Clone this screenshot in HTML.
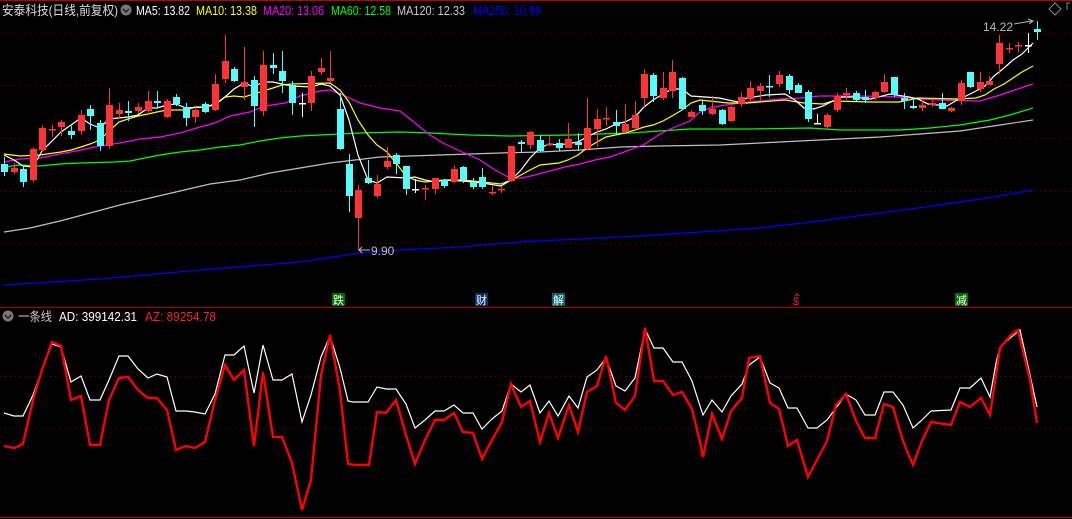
<!DOCTYPE html>
<html><head><meta charset="utf-8"><style>
html,body{margin:0;padding:0;background:#000;width:1072px;height:519px;overflow:hidden}
svg{display:block}
text{font-family:"Liberation Sans","Noto Sans CJK SC",sans-serif}
</style></head><body>
<svg id="s" width="1072" height="519" viewBox="0 0 1072 519" xmlns="http://www.w3.org/2000/svg">
<rect width="1072" height="519" fill="#000"/>
<line x1="0" y1="0.5" x2="1072" y2="0.5" stroke="#b00" stroke-width="1"/>
<g stroke="#8a0000" stroke-dasharray="1 4" stroke-width="1">
<line x1="0" y1="33.5" x2="1072" y2="33.5"/><line x1="0" y1="85.5" x2="1072" y2="85.5"/>
<line x1="0" y1="138.5" x2="1072" y2="138.5"/><line x1="0" y1="191.5" x2="1072" y2="191.5"/>
<line x1="0" y1="243.5" x2="1072" y2="243.5"/>
<line x1="0" y1="376.5" x2="1072" y2="376.5"/><line x1="0" y1="428.5" x2="1072" y2="428.5"/>
</g>
<line x1="0" y1="307.5" x2="1072" y2="307.5" stroke="#a00" />
<line x1="0" y1="517.5" x2="1072" y2="517.5" stroke="#a00" />
<g id="ma" fill="none" stroke-width="1.2">
<polyline stroke="#0000ff" points="4,285 100,279 200,270 300,262 360,253 400,250 460,247 520,242 580,239 640,236 700,232 760,228 820,221 880,213 940,205 1000,196 1033,190"/>
<polyline stroke="#c0c0c0" points="4,232 30,228 60,221 90,213 120,205 150,198 180,191 210,184 240,180 270,173 300,168 330,163 355,160 380,157 410,156 440,155 470,154 500,153 540,152 580,150 620,147 660,146 720,145 760,143 800,141 840,139 880,137 920,134 960,131 1000,125 1033,120"/>
<polyline stroke="#00ff00" points="4,167 20,165 40,166 60,164 80,163 115,162 130,161 145,158 160,155 180,152 200,150 220,147 240,145 260,141 280,138 300,136 320,135 340,134 360,133 400,132 430,133 470,135 510,136 570,135 600,134 630,133 660,131 690,129 750,129 810,128 840,130 900,130 930,128 960,125 990,120 1010,115 1033,108"/>
<polyline stroke="#ff00ff" points="4,162 20,159 40,158 60,154 81,150 100,146 120,143 140,139 160,137 180,133 200,127 215,123 230,116 250,112 265,106 285,103 300,96 320,91 330,90 345,96 360,103 380,108 400,111 415,123 430,135 445,144 460,151 480,160 495,170 510,178 522,178 535,175 550,171 565,167 580,164 595,160 610,157 630,150 645,144 660,134 675,127 690,121 700,112 710,108 720,106 740,103 760,101 780,99 800,98 820,96 860,96 900,97 920,99 940,100 980,101 1000,95 1015,90 1033,84"/>
<polyline stroke="#ffff00" points="4,154 20,156 40,155 61,152 71,150 81,147 90,144 100,140 109,131 119,122 128,119 138,116 148,114 157,112 167,110 186,110 195,107 205,107 215,104 225,97 234,96 244,97 254,94 263,91 273,88 282,85 292,84 330,83 340,90 349,102 358,120 368,135 377,145 387,152 396,163 406,176 415,180 425,182 444,180 463,180 482,182 501,184 511,180 521,175 530,170 540,165 559,163 568,160 578,155 587,148 597,142 606,137 625,133 635,130 644,127 653,125 663,121 672,116 682,110 691,103 700,100 728,103 747,103 785,100 804,103 823,104 833,101 871,102 899,102 909,100 918,98 957,99 976,98 985,95 994,89 1004,84 1013,78 1022,72 1033,66"/>
<polyline stroke="#ffffff" points="4,155 14,160 23,166 33,167 42,151 52,141 61,132 71,125 81,118 90,124 100,128 109,119 128,117 138,115 148,108 157,108 167,105 176,104 186,108 205,107 215,105 225,97 234,89 244,83 254,87 263,82 273,82 282,84 292,86 311,87 321,84 330,86 340,95 349,120 358,155 368,180 377,183 387,177 406,178 415,177 425,180 435,182 444,180 463,181 482,183 501,186 511,180 521,170 530,158 540,148 549,144 559,145 578,142 587,137 597,132 606,129 616,124 625,122 635,117 644,107 653,100 663,94 672,89 682,89 691,96 719,98 738,102 747,98 766,95 785,94 795,100 804,108 814,109 823,106 833,101 842,97 852,97 871,99 890,94 909,97 918,99 928,104 947,106 957,100 966,96 976,91 985,86 994,76 1004,68 1013,60 1022,54 1033,43"/>
</g>
<g id="c"></g>
<polyline fill="none" stroke="#fff" stroke-width="1.2" points="4,413 14,416 23,416 33,395 42,370 52,344 61,347 71,382 81,376 90,400 100,400 109,380 119,356 128,356 138,369 148,378 157,374 167,377 176,411 186,411 195,412 205,414 215,394 225,355 234,355 244,346 254,393 263,345 273,380 282,380 292,374 302,422 311,395 321,357 330,336 340,368 348,401 353,402 368,402 377,387 386,389 396,389 406,404 415,428 425,420 435,411 444,411 454,405 463,413 473,413 482,429 492,419 502,411 511,384 521,392 530,385 540,413 549,401 558,416 569,396 578,408 587,377 597,370 606,358 616,386 625,391 635,378 645,329 654,348 663,348 673,362 682,362 692,381 700,406 703,415 712,400 722,412 731,396 742,384 749,365 760,357 770,383 779,388 788,408 797,408 808,428 817,428 827,420 836,408 846,394 856,400 865,415 875,415 884,392 893,392 903,405 913,428 922,420 931,411 951,410 960,388 970,388 981,378 990,397 996,363 1000,347 1010,338 1020,330 1030,375 1037,407"/>
<polyline fill="none" stroke="#ff0000" stroke-width="2.4" points="4,446 14,448 23,444 33,400 42,370 52,342 61,346 71,400 81,396 90,445 100,445 109,400 119,378 128,377 138,390 148,398 157,398 167,410 176,450 186,446 195,448 205,442 215,400 225,365 234,380 244,370 254,446 263,372 273,437 282,437 292,463 302,510 311,480 321,375 330,335 340,391 348,464 355,465 369,465 377,412 386,413 396,400 406,435 415,464 425,440 435,420 444,420 454,413 463,432 473,433 482,459 492,440 502,422 511,384 521,407 530,401 540,442 549,413 558,438 569,405 578,432 587,392 597,386 606,356 616,403 625,410 635,396 645,328 654,381 663,381 673,395 682,392 692,409 700,442 703,457 712,414 722,439 731,411 742,398 749,358 760,356 770,403 779,409 788,446 797,440 808,477 817,460 827,441 836,405 846,394 856,421 865,438 875,438 884,404 893,407 903,441 913,465 922,441 931,422 951,425 960,402 970,407 981,398 990,415 1000,348 1010,336 1018,330 1030,380 1037,423"/>
<text x="2" y="15" font-size="13" fill="#ddd" textLength="116" lengthAdjust="spacingAndGlyphs">安泰科技(日线,前复权)</text>
<circle cx="126" cy="10" r="5.5" fill="#777"/><path d="M123 9 L126 12 L129 9" stroke="#222" stroke-width="1.5" fill="none"/>
<text x="136" y="15" font-size="12.5" fill="#fff" textLength="54" lengthAdjust="spacingAndGlyphs">MA5: 13.82</text>
<text x="196" y="15" font-size="12.5" fill="#ffff00" textLength="61" lengthAdjust="spacingAndGlyphs">MA10: 13.38</text>
<text x="263" y="15" font-size="12.5" fill="#ff00ff" textLength="61" lengthAdjust="spacingAndGlyphs">MA20: 13.06</text>
<text x="331" y="15" font-size="12.5" fill="#00ff00" textLength="60" lengthAdjust="spacingAndGlyphs">MA60: 12.58</text>
<text x="397" y="15" font-size="12.5" fill="#c8c8c8" textLength="68" lengthAdjust="spacingAndGlyphs">MA120: 12.33</text>
<text x="473" y="15" font-size="12.5" fill="#0000ff" textLength="68" lengthAdjust="spacingAndGlyphs">MA250: 10.99</text>
<path d="M1049 9 L1055 3 L1061 9 L1055 15 Z" fill="none" stroke="#888" />
<path d="M1070 3 L1067 3 L1067 10" fill="none" stroke="#888"/>
<text x="983" y="31" font-size="12" fill="#bbb">14.22</text>
<path d="M1014 24 L1032 21 M1028 19 L1033 21 L1029 24" stroke="#bbb" fill="none"/>
<path d="M359 250 L370 250 M362 247 L359 250 L362 253" stroke="#bbb" fill="none"/>
<text x="371" y="255" font-size="12" fill="#bbb">9.90</text>
<rect x="332" y="293" width="13" height="13" fill="#007000"/><text x="333" y="304" font-size="11" fill="#fff">跌</text>
<rect x="475" y="293" width="13" height="13" fill="#0a3070"/><text x="476" y="304" font-size="11" fill="#fff">财</text>
<rect x="552" y="293" width="13" height="13" fill="#006868"/><text x="553" y="304" font-size="11" fill="#fff">解</text>
<text x="793" y="305" font-size="11" fill="#ff2020">$</text><path d="M795 296 L797 294 L799 296" stroke="#f22" fill="none"/>
<rect x="955" y="293" width="13" height="13" fill="#007000"/><text x="956" y="304" font-size="11" fill="#fff">减</text>
<circle cx="8" cy="316" r="5.5" fill="#777"/><path d="M5 315 L8 318 L11 315" stroke="#222" stroke-width="1.5" fill="none"/>
<text x="18" y="321" font-size="12.5" fill="#ccc" textLength="34" lengthAdjust="spacingAndGlyphs">一条线</text>
<text x="59" y="321" font-size="12.5" fill="#fff" textLength="78" lengthAdjust="spacingAndGlyphs">AD: 399142.31</text>
<text x="145" y="321" font-size="12.5" fill="#ff2020" textLength="71" lengthAdjust="spacingAndGlyphs">AZ: 89254.78</text>
</svg>
<script>
var d=[[4,164,172,157,176,'c'],[14,168,172,163,174,'r'],[23,169,182,166,187,'c'],[33,149,180,147,182,'r'],[42,128,150,125,152,'r'],[52,129,130,125,137,'r'],[61,122,127,120,136,'r'],[71,131,135,126,139,'c'],[81,115,131,110,135,'r'],[90,109,116,105,130,'c'],[100,123,146,120,151,'c'],[109,105,146,88,149,'r'],[119,110,114,103,119,'r'],[128,111,113,101,121,'c'],[138,107,111,103,114,'r'],[148,101,111,91,114,'r'],[157,101,103,91,108,'c'],[167,101,117,99,118,'r'],[176,97,104,94,106,'c'],[186,107,118,103,126,'c'],[195,110,117,107,123,'r'],[205,104,112,102,113,'c'],[215,84,110,74,111,'r'],[225,61,79,35,83,'r'],[234,69,81,67,82,'c'],[244,82,87,47,100,'r'],[254,80,106,76,127,'c'],[263,65,111,51,116,'r'],[273,65,68,53,74,'c'],[282,71,81,51,93,'c'],[292,85,103,81,115,'c'],[302,103,104,93,117,'w'],[311,76,103,71,111,'r'],[321,68,72,58,75,'r'],[330,78,81,51,83,'r'],[340,109,149,93,150,'c'],[349,164,196,154,212,'c'],[358,190,218,185,250,'r'],[368,178,183,160,184,'c'],[377,184,196,175,198,'r'],[387,161,167,147,169,'r'],[396,155,164,153,174,'c'],[406,166,189,166,195,'c'],[415,189,190,179,193,'w'],[425,188,189,185,200,'r'],[435,178,189,178,194,'r'],[444,180,186,179,188,'c'],[454,169,182,165,183,'r'],[463,167,180,166,183,'c'],[473,182,187,178,189,'c'],[482,177,187,168,189,'c'],[492,192,193,186,195,'r'],[501,189,190,186,193,'r'],[511,146,181,146,182,'r'],[521,142,144,140,152,'c'],[530,132,145,131,149,'r'],[540,140,151,136,152,'c'],[549,144,145,136,146,'r'],[559,143,148,139,151,'c'],[568,139,148,123,148,'r'],[578,142,145,133,151,'c'],[587,128,149,98,150,'r'],[597,119,129,109,147,'r'],[606,118,119,107,126,'r'],[616,122,126,110,135,'c'],[625,124,132,104,133,'r'],[635,115,128,101,131,'r'],[644,74,98,69,107,'r'],[653,75,96,73,102,'c'],[663,88,98,72,100,'r'],[672,72,91,60,98,'r'],[682,78,109,77,110,'c'],[691,112,117,110,117,'r'],[702,105,111,100,115,'c'],[712,109,114,96,115,'r'],[722,110,124,109,125,'c'],[731,107,121,106,122,'r'],[741,97,104,92,107,'r'],[750,88,99,81,102,'r'],[760,86,91,83,100,'r'],[769,86,87,75,97,'c'],[779,75,84,71,87,'r'],[789,76,90,74,94,'c'],[798,85,93,83,93,'c'],[808,92,119,90,122,'c'],[817,123,124,114,124,'w'],[827,115,127,113,129,'r'],[837,96,110,93,112,'r'],[846,93,95,88,100,'r'],[856,93,100,91,102,'c'],[865,97,100,90,103,'c'],[875,92,98,91,100,'r'],[884,82,92,74,93,'r'],[894,77,95,77,97,'c'],[904,98,101,93,109,'c'],[913,106,108,98,109,'c'],[922,105,108,100,111,'r'],[932,103,105,100,107,'r'],[942,103,109,93,109,'c'],[951,108,111,107,112,'r'],[961,83,101,80,105,'r'],[970,72,87,72,88,'c'],[980,82,89,72,92,'r'],[989,81,85,76,85,'r'],[999,43,64,35,74,'r'],[1009,48,49,43,53,'r'],[1018,45,46,42,52,'r'],[1028,45,46,33,53,'w'],[1037,29,32,21,40,'c']];
var col={r:'#ff3333',c:'#54fcfc',w:'#ffffff'},h='';
d.forEach(function(a){var x=a[0],c=col[a[5]];
h+='<line x1="'+(x+.5)+'" y1="'+a[3]+'" x2="'+(x+.5)+'" y2="'+a[4]+'" stroke="'+c+'"/>';
h+='<rect x="'+(x-3)+'" y="'+a[1]+'" width="7" height="'+Math.max(1.5,a[2]-a[1])+'" fill="'+c+'"/>';});
document.getElementById('c').innerHTML=h;
</script>
</body></html>
